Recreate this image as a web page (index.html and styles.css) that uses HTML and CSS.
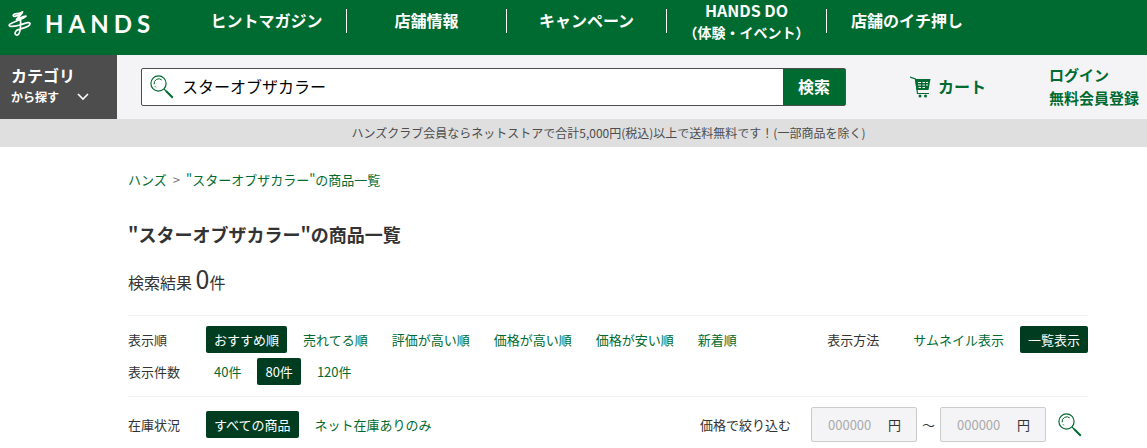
FILE: index.html
```
<!DOCTYPE html>
<html lang="ja">
<head>
<meta charset="utf-8">
<title>"スターオブザカラー"の商品一覧 | ハンズ</title>
<link rel="stylesheet" href="styles.css">
</head>

<body>
  <svg class="defs" aria-hidden="true">
    <symbol id="icon_search" viewBox="0 0 24 24">
      <g fill="none" stroke="currentColor">
        <circle cx="8.5" cy="8.5" r="7.6" stroke-width="1.2"/>
        <path d="M4.2 9.3a4.6 4.6 0 0 1 7.6-4.3M5 11.3l.8 1" stroke-width="1"/>
        <path d="M14 14l2.4 2.4" stroke-width="1.2"/>
        <path d="M16 16l6.8 6.8" stroke-width="2"/>
      </g>
    </symbol>
  </svg>

  <header class="header">
    <a class="logo" href="#">
      <svg class="logo_mark" viewBox="0 0 24 27" aria-hidden="true">
        <path d="M14.500 1.800C12 4 9 3.200 6.500 4C4.500 5 5 6.800 7.500 6.200C10.500 5.500 13.500 4 14.500 1.800C14 5 10 7 8.500 9.500C11 9 15 6 18 6.200C15 9.500 4 12 1.500 14.500C0 17.200 6 16.500 11 15.200C16 13.800 22 11 22 13.800C21.500 17.500 12 18.500 8.500 20.500C6 23 7 25.500 9.500 25C12.500 24 12.800 17 12.500 9.500" fill="none" stroke="currentColor" stroke-width="1.700" stroke-linecap="round" stroke-linejoin="round"/>
      </svg>
      <span class="logo_text">HANDS</span>
    </a>
    <nav class="nav">
      <a href="#">ヒントマガジン</a>
      <a href="#">店舗情報</a>
      <a href="#">キャンペーン</a>
      <a href="#" class="two_lines">HANDS DO<small>（体験・イベント）</small></a>
      <a href="#">店舗のイチ押し</a>
    </nav>
  </header>

  <div class="tools">
    <button class="category" type="button">
      <span class="category_title">カテゴリ</span>
      <span class="category_sub">から探す
        <svg class="chevron" viewBox="0 0 12 8" aria-hidden="true"><path d="M1 1l5 5 5-5" fill="none" stroke="currentColor" stroke-width="1.600"/></svg>
      </span>
    </button>
    <form class="search">
      <svg class="icon" aria-hidden="true"><use href="#icon_search"/></svg>
      <input type="text" value="スターオブザカラー" aria-label="キーワード">
      <button type="submit">検索</button>
    </form>
    <a class="cart" href="#">
      <svg viewBox="0 0 22 22" aria-hidden="true">
        <path d="M0 1l5.500 2 2 14.500H19" fill="none" stroke="currentColor" stroke-width="1.200"/>
        <path d="M5 3h15.500l-2 11H6.500z" fill="currentColor"/>
        <path d="M8 6.500h3M12.500 6.500h2.500M16 6.500h2M8 9h3M12.500 9h2.500M16 9h2M8.500 11.500h2.500M12.500 11.500h2.500" stroke="#f4f4f7" stroke-width="1.200"/>
        <circle cx="10" cy="20" r="1.500" fill="currentColor"/>
        <circle cx="15.500" cy="20" r="1.500" fill="currentColor"/>
      </svg>
      <span>カート</span>
    </a>
    <div class="member">
      <a href="#">ログイン</a>
      <a href="#">無料会員登録</a>
    </div>
  </div>

  <p class="notice">ハンズクラブ会員ならネットストアで合計5,000円(税込)以上で送料無料です！(一部商品を除く)</p>

  <main class="content">
    <nav class="breadcrumb">
      <a href="#">ハンズ</a><span>&gt;</span><a href="#">"スターオブザカラー"の商品一覧</a>
    </nav>
    <h1>"スターオブザカラー"の商品一覧</h1>
    <p class="result">検索結果 <span>0</span>件</p>

    <section class="filter">
      <div class="row">
        <span class="label">表示順</span>
        <div class="options">
          <a href="#" class="current">おすすめ順</a>
          <a href="#">売れてる順</a>
          <a href="#">評価が高い順</a>
          <a href="#">価格が高い順</a>
          <a href="#">価格が安い順</a>
          <a href="#">新着順</a>
        </div>
        <div class="side">
          <span class="label">表示方法</span>
          <div class="options">
            <a href="#">サムネイル表示</a>
            <a href="#" class="current">一覧表示</a>
          </div>
        </div>
      </div>
      <div class="row">
        <span class="label">表示件数</span>
        <div class="options">
          <a href="#">40件</a>
          <a href="#" class="current">80件</a>
          <a href="#">120件</a>
        </div>
      </div>
    </section>

    <section class="filter">
      <div class="row">
        <span class="label">在庫状況</span>
        <div class="options">
          <a href="#" class="current">すべての商品</a>
          <a href="#">ネット在庫ありのみ</a>
        </div>
        <form class="price">
          <span class="price_label">価格で絞り込む</span>
          <label class="price_box"><input type="text" placeholder="000000" aria-label="下限価格">円</label>
          <span class="tilde">～</span>
          <label class="price_box"><input type="text" placeholder="000000" aria-label="上限価格">円</label>
          <button type="submit" aria-label="絞り込む"><svg class="icon" aria-hidden="true"><use href="#icon_search"/></svg></button>
        </form>
      </div>
    </section>
  </main>
</body>
</html>
```
FILE: styles.css
```
* {
  box-sizing: border-box;
}

body {
  margin: 0;
  background-color: #fff;
  color: #333;
  font-family: "Noto Sans CJK JP", sans-serif;
  font-size: 13px;
  line-height: 20px;
}

a {
  color: #006b31;
  text-decoration: none;
  white-space: nowrap;
}

button, input {
  font-family: inherit;
  border: none;
  padding: 0;
  margin: 0;
}

button {
  cursor: pointer;
}

.defs {
  display: none;
}

.icon {
  display: block;
  width: 24px;
  height: 24px;
  color: #006b31;
  flex: none;
}

/* header */
.header {
  display: flex;
  height: 55px;
  background-color: #006b31;
}

.logo {
  display: flex;
  align-items: flex-start;
  width: 187px;
  padding: 10px 0 0 8px;
  color: #fff;
}

.logo_mark {
  width: 24px;
  height: 27px;
}

.logo_text {
  margin-left: 13px;
  font-family: Lato, sans-serif;
  font-size: 24px;
  font-weight: bold;
  line-height: 28px;
  letter-spacing: 5px;
}

.nav {
  display: flex;
  padding-top: 9px;
}

.nav a {
  width: 160px;
  height: 24px;
  border-right: 1px solid #fff;
  color: #fff;
  font-size: 16px;
  font-weight: bold;
  line-height: 22px;
  text-align: center;
}

.nav a:last-child {
  border-right: none;
}

.nav .two_lines {
  line-height: 2px;
}

.nav small {
  display: block;
  font-size: 14px;
  line-height: 42px;
}

/* search bar */
.tools {
  display: flex;
  align-items: center;
  height: 64px;
  padding-right: 8px;
  background-color: #f4f4f7;
}

.category {
  align-self: stretch;
  width: 117px;
  padding: 0 0 2px 11px;
  background-color: #4d4d4d;
  color: #fff;
  font-weight: bold;
  text-align: left;
}

.category_title {
  display: block;
  font-size: 16px;
  line-height: 22px;
}

.category_sub {
  display: flex;
  align-items: center;
  font-size: 12px;
  line-height: 22px;
}

.chevron {
  width: 12px;
  height: 8px;
  margin-left: 18px;
}

.search {
  display: flex;
  align-items: center;
  flex: 0 1 705px;
  height: 38px;
  margin-left: 24px;
  padding-left: 8px;
  border: 1px solid #4d4d4d;
  border-radius: 2px;
  background-color: #fff;
}

.search input {
  flex: 1;
  min-width: 0;
  height: 36px;
  padding: 0 0 3px 8px;
  background: none;
  color: #000;
  font-size: 16px;
}

.search button {
  width: 62px;
  height: 36px;
  padding-bottom: 2px;
  background-color: #006b31;
  color: #fff;
  font-size: 16px;
  font-weight: bold;
}

.cart {
  display: flex;
  align-items: center;
  gap: 6px;
  margin-left: 64px;
  font-size: 16px;
  font-weight: bold;
}

.cart svg {
  width: 22px;
  height: 22px;
}

.cart span {
  padding-bottom: 3px;
}

.member {
  margin-left: auto;
  padding-bottom: 2px;
  font-size: 15px;
  font-weight: bold;
  line-height: 23px;
}

.member a {
  display: block;
}

.notice {
  margin: 0;
  padding-left: 70px;
  background-color: #dfdfdf;
  color: #4d4d4d;
  font-size: 12px;
  line-height: 28px;
  text-align: center;
}

/* item list */
.content {
  max-width: 1088px;
  padding: 23px 0 0 128px;
}

.breadcrumb span {
  margin: 0 6px;
  color: #777;
}

h1 {
  margin: 30px 0 0;
  font-size: 18px;
  line-height: 28px;
}

.result {
  margin: 14px 0 17px;
  font-size: 16px;
  line-height: 32px;
}

.result span {
  font-size: 25px;
}

.filter {
  padding: 10px 0 11px;
  border-top: 1px solid #f3f3f3;
}

.row {
  display: flex;
  align-items: center;
}

.row + .row {
  margin-top: 5px;
}

.row > .label {
  width: 78px;
}

.options {
  display: flex;
  gap: 8px;
}

.options a {
  padding: 0 8px;
  border-radius: 2px;
  line-height: 27px;
}

.options .current {
  background-color: #003d20;
  color: #fff;
}

.side {
  display: flex;
  align-items: center;
  gap: 26px;
  margin-left: auto;
}

.price {
  display: flex;
  align-items: center;
  margin-left: auto;
  padding-right: 6px;
}

.price_label {
  margin-right: 20px;
}

.price_box {
  display: flex;
  align-items: center;
  width: 106px;
  height: 35px;
  padding-left: 16px;
  border: 1px solid #ccc;
  border-radius: 2px;
  background-color: #f4f4f7;
}

.price_box input {
  width: 60px;
  background: none;
  font-size: 13px;
}

.price_box input::placeholder {
  color: #aaa;
}

.tilde {
  margin: 0 5px;
}

.price button {
  margin-left: 12px;
  background: none;
}
```
